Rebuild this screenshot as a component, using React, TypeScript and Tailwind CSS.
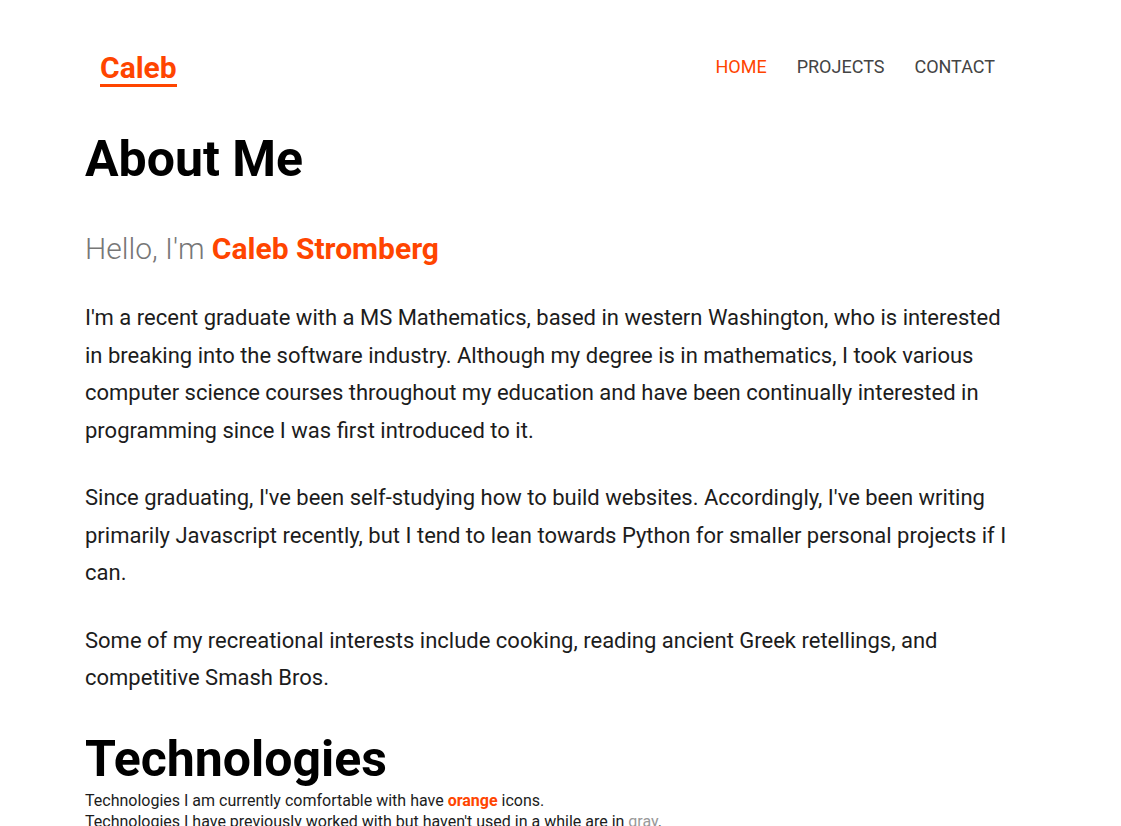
const ORANGE = 'text-[#ff4500]';

function Header() {
  return (
    <header className="flex items-start justify-between pt-[51px] pl-[100px] pr-[126px]">
      <a className={`${ORANGE} text-[30px] font-bold leading-[33px] border-b-[3px] border-[#ff4500]`}>Caleb</a>
      <nav className="flex gap-[30px] text-[18px] leading-[24px] uppercase mt-[4px]">
        <a className={ORANGE}>Home</a>
        <a className="text-[#444]">Projects</a>
        <a className="text-[#444]">Contact</a>
      </nav>
    </header>
  );
}

export default function App() {
  return (
    <div className="min-h-screen bg-white text-[#1c1c1c]" style={{ fontFamily: 'Roboto, "Liberation Sans", sans-serif' }}>
      <Header />
      <main className="pl-[85px] w-[1015px]">
        <h1 className="text-[50px] font-bold text-black leading-[60px] mt-[42px]">About Me</h1>
        <h3 className="text-[30px] font-light text-[#777] leading-[36px] mt-[42px]">
          Hello, I'm <span className="font-bold text-[#ff4500]">Caleb Stromberg</span>
        </h3>
        <div className="text-[22px] leading-[37.5px] mt-[32px] flex flex-col gap-[30px]">
          <p>
            I'm a recent graduate with a MS Mathematics, based in western Washington, who is interested in breaking into the software industry. Although my degree is in mathematics, I took various computer science courses throughout my education and have been continually interested in programming since I was first introduced to it.
          </p>
          <p>
            Since graduating, I've been self-studying how to build websites. Accordingly, I've been writing primarily Javascript recently, but I tend to lean towards Python for smaller personal projects if I can.
          </p>
          <p>
            Some of my recreational interests include cooking, reading ancient Greek retellings, and competitive Smash Bros.
          </p>
        </div>
        <h2 className="text-[50px] font-bold text-black leading-[60px] mt-[32px]">Technologies</h2>
        <p className="text-[16px] leading-[21px] mt-[1px]">
          Technologies I am currently comfortable with have <span className="font-bold text-[#ff4500]">orange</span> icons.
          <br />
          Technologies I have previously worked with but haven't used in a while are in <span className="text-[#999]">gray</span>.
        </p>
      </main>
    </div>
  );
}
